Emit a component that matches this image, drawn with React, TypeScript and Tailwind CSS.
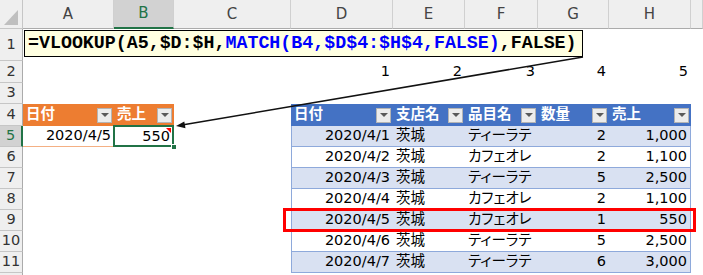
import React from "react";

type Row = [string, string, string, string, string];

const data: Row[] = [
  ["2020/4/1", "茨城", "ティーラテ", "2", "1,000"],
  ["2020/4/2", "茨城", "カフェオレ", "2", "1,100"],
  ["2020/4/3", "茨城", "ティーラテ", "5", "2,500"],
  ["2020/4/4", "茨城", "カフェオレ", "2", "1,100"],
  ["2020/4/5", "茨城", "カフェオレ", "1", "550"],
  ["2020/4/6", "茨城", "ティーラテ", "5", "2,500"],
  ["2020/4/7", "茨城", "ティーラテ", "6", "3,000"],
];

const letters = ["A", "B", "C", "D", "E", "F", "G", "H", ""];
const heads = ["日付", "支店名", "品目名", "数量", "売上"];

function Drop() {
  return (
    <span className="ml-auto mr-[2px] flex h-[15px] w-[15px] shrink-0 items-center justify-center border border-[#b4b4b4] bg-[#ececec]">
      <span className="h-0 w-0 border-x-[4px] border-t-[4px] border-x-transparent border-t-[#5a5a5a]" />
    </span>
  );
}

function bodyCell(r: number, c: number) {
  const key = `${r}-${c}`;

  if (r === 2 && c >= 3 && c <= 7) {
    return (
      <div key={key} className="flex items-center justify-end pr-[3px]">
        {c - 2}
      </div>
    );
  }

  if (r === 4 && c <= 1) {
    return (
      <div key={key} className="flex items-center bg-[#ed7d31] pl-[3px] font-bold text-white">
        {c === 0 ? "日付" : "売上"}
        <Drop />
      </div>
    );
  }

  if (r === 4 && c >= 3 && c <= 7) {
    return (
      <div key={key} className="flex items-center bg-[#4472c4] pl-[3px] font-bold text-white">
        {heads[c - 3]}
        <Drop />
      </div>
    );
  }

  if (r === 5 && c === 0) {
    return (
      <div key={key} className="flex items-center justify-end border-b border-[#f4b084] pr-[3px]">
        2020/4/5
      </div>
    );
  }

  if (r === 5 && c === 1) {
    return (
      <div key={key} className="relative flex items-center justify-end pr-[4px]">
        550
        <span className="absolute -left-[1px] -top-[1px] bottom-0 right-0 border-2 border-[#217346]" />
        <span className="absolute right-[3px] top-[2px] h-0 w-0 border-l-[5px] border-t-[5px] border-l-transparent border-t-[#ff0000]" />
        <span className="absolute -bottom-[3px] -right-[3px] h-[6px] w-[6px] border border-white bg-[#217346]" />
      </div>
    );
  }

  if (r >= 5 && r <= 11 && c >= 3 && c <= 7) {
    const row = data[r - 5];
    const band = (r - 5) % 2 === 0 ? "bg-[#d9e1f2]" : "bg-white";
    const edge = c === 3 ? "border-l" : c === 7 ? "border-r" : "";
    const align = c === 4 || c === 5 ? "justify-start pl-[3px]" : "justify-end pr-[3px]";
    return (
      <div
        key={key}
        className={`flex items-center whitespace-nowrap border-b border-[#8ea9db] ${band} ${edge} ${align} ${c === 5 ? "[font-feature-settings:'palt']" : ""}`}
      >
        {row[c - 3]}
      </div>
    );
  }

  return <div key={key} />;
}

export default function App() {
  const cells: React.ReactNode[] = [];

  cells.push(
    <div key="corner" className="border-b border-r border-[#c6c6c6] bg-[#efefef]">
      <svg width="22" height="28" viewBox="0 0 22 28">
        <polygon points="4,25 18,25 18,10" fill="#bfbfbf" />
      </svg>
    </div>
  );

  letters.forEach((l, i) => {
    const on = i === 1;
    cells.push(
      <div
        key={"h" + i}
        className={`flex items-center justify-center border-r border-[#d0d0d0] text-[15px] ${
          on ? "border-b-2 border-b-[#217346] bg-[#d2d2d2] text-[#217346]" : "border-b border-b-[#ababab] bg-[#efefef] text-[#444]"
        }`}
      >
        {l}
      </div>
    );
  });

  for (let r = 1; r <= 12; r++) {
    const on = r === 5;
    cells.push(
      <div
        key={"r" + r}
        className={`flex items-center justify-center border-b border-[#c6c6c6] text-[14.5px] ${
          on ? "border-r-2 border-r-[#217346] bg-[#d2d2d2] text-[#217346]" : "border-r border-r-[#ababab] bg-[#efefef] text-[#333]"
        }`}
      >
        {r < 12 ? r : ""}
      </div>
    );
    for (let c = 0; c < 9; c++) cells.push(bodyCell(r, c));
  }

  return (
    <div className="relative h-[275px] w-[703px] overflow-hidden bg-white font-['DejaVu_Sans','Noto_Sans_CJK_JP',sans-serif] text-[14.5px] text-black">
      <div className="grid grid-cols-[23px_91px_60px_117px_102px_72px_73px_71px_82px_1fr] grid-rows-[29px_32px_22px_21px_22px_21px_21px_21px_21px_21px_21px_21px_21px]">
        {cells}
      </div>

      {/* formula callout */}
      <div className="absolute left-[24px] top-[30px] flex h-[27px] w-[559px] items-center border border-black bg-[#ffffe1] pl-[3px] font-['Liberation_Mono',monospace] text-[18.3px] font-bold leading-none">
        <span>=VLOOKUP(A5,$D:$H,</span>
        <span className="text-[#0000ff]">MATCH(B4,$D$4:$H$4,FALSE)</span>
        <span>,FALSE)</span>
      </div>

      <svg className="pointer-events-none absolute left-0 top-0" width="703" height="275">
        <line x1="583" y1="57" x2="182" y2="125" stroke="#111" strokeWidth="1.5" />
        <polygon points="176,126 185.5,128.3 184.3,121.4" fill="#111" />
      </svg>

      <div className="absolute left-[283px] top-[208px] h-[24px] w-[413px] border-[3px] border-[#ff0000]" />
    </div>
  );
}
